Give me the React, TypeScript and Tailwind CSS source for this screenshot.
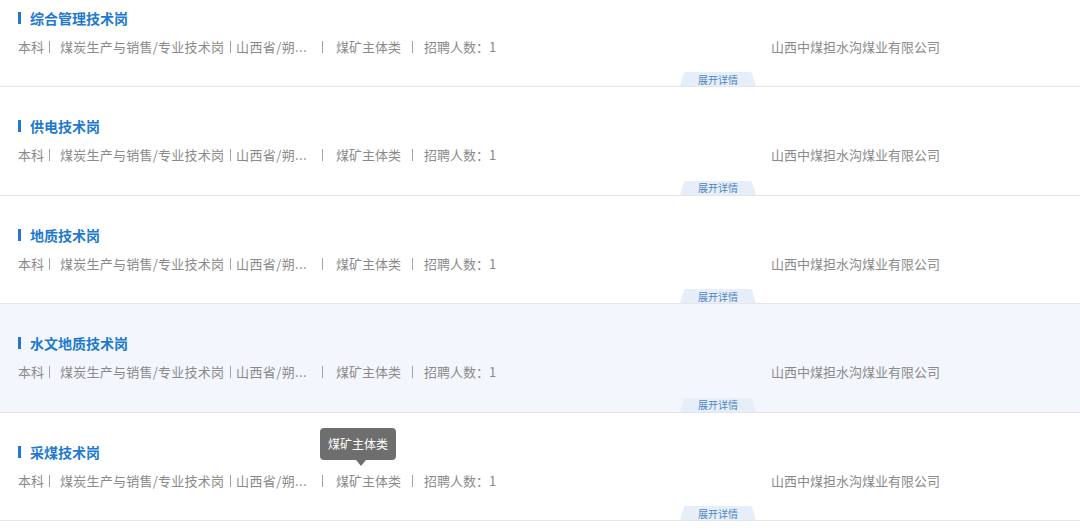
const jobs = ["综合管理技术岗", "供电技术岗", "地质技术岗", "水文地质技术岗", "采煤技术岗"];

function DetailTab() {
  return (
    <div className="relative ml-[680px] mt-auto h-[14px] w-[76px]">
      <svg className="absolute inset-0" width="76" height="14" viewBox="0 0 76 14">
        <path d="M0 14 L3.6 2.2 Q4.2 0 6.5 0 L69.5 0 Q71.8 0 72.4 2.2 L76 14 Z" fill="#e6eef9" />
      </svg>
      <span className="relative flex h-full items-center justify-center pt-[1px] text-[10px] leading-none text-[#4f86c4]">
        展开详情
      </span>
    </div>
  );
}

function Sep({ className = "" }: { className?: string }) {
  return <span className={`h-[12px] w-[1px] shrink-0 bg-[#a2a2a2] ${className}`} />;
}

function JobRow({ title, active, tooltip }: { title: string; active?: boolean; tooltip?: boolean }) {
  return (
    <div
      className={`relative flex h-[108.5px] flex-col border-b border-[#e6e6e6] pt-[29px] ${
        active ? "bg-[#f3f7fd]" : "bg-white"
      }`}
    >
      <div className="flex h-[20px] items-center pl-[18px]">
        <span className="h-[12px] w-[3px] bg-[#2079cf]" />
        <span className="ml-[9px] text-[14px] font-bold leading-[20px] text-[#2079cf]">{title}</span>
      </div>
      <div className="mt-[9px] flex h-[20px] items-center whitespace-nowrap pl-[18px] text-[13px] leading-[20px] text-[#8a8a8a]">
        <span className="w-[26px] shrink-0">本科</span>
        <Sep className="ml-[5px]" />
        <span className="ml-[10px] w-[164px] shrink-0 tracking-[0.25px]">煤炭生产与销售/专业技术岗</span>
        <Sep className="ml-[6px]" />
        <span className="ml-[5px] w-[72px] shrink-0 tracking-[0.4px]">山西省/朔...</span>
        <Sep className="ml-[14px]" />
        <span className="ml-[13px] w-[65px] shrink-0">煤矿主体类</span>
        <Sep className="ml-[11px]" />
        <span className="ml-[11px]">招聘人数：1</span>
        <span className="absolute left-[771px]">山西中煤担水沟煤业有限公司</span>
      </div>
      <DetailTab />
      {tooltip && (
        <div className="absolute left-[320px] top-[15px] flex h-[32px] w-[76px] items-center justify-center rounded-[4px] bg-[#6e6e6e] text-[12px] text-white">
          煤矿主体类
          <span className="absolute left-[36px] top-[32px] h-0 w-0 border-x-[5px] border-t-[6px] border-x-transparent border-t-[#6e6e6e]" />
        </div>
      )}
    </div>
  );
}

export default function App() {
  return (
    <div
      className="h-[531px] w-[1080px] overflow-hidden bg-white"
      style={{ fontFamily: '"Noto Sans CJK SC", "Noto Sans", sans-serif' }}
    >
      <div className="mt-[-21.5px]">
        {jobs.map((j, i) => (
          <JobRow key={j} title={j} active={i === 3} tooltip={i === 4} />
        ))}
      </div>
    </div>
  );
}
